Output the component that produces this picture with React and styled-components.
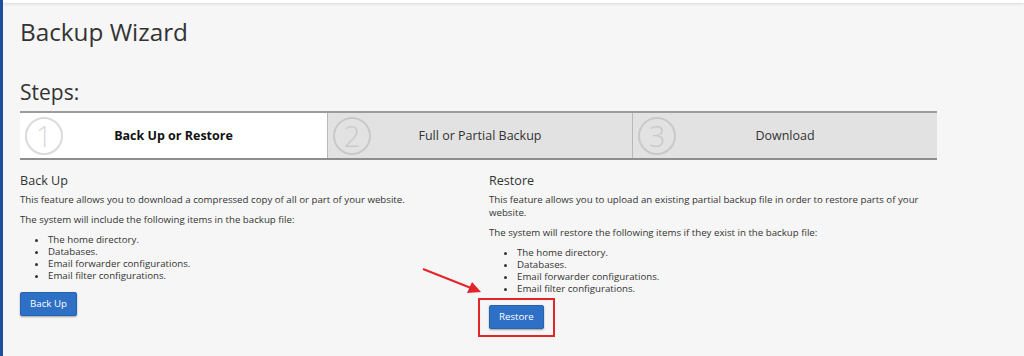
import React from 'react'
import styled, { createGlobalStyle } from 'styled-components'

const GlobalStyle = createGlobalStyle`
  html, body {
    margin: 0;
    padding: 0;
    background: #f6f6f6;
  }
  body {
    font-family: "Open Sans", "Liberation Sans", sans-serif;
    color: #333;
  }
`;

const Page = styled.div`
  display: flex;
  min-height: 356px;
`;

const SideBar = styled.div`
  width: 3px;
  background: #1e4f9f;
  flex-shrink: 0;
`;

const Main = styled.div`
  flex: 1;
  display: flex;
  flex-direction: column;
`;

const TopStrip = styled.div`
  height: 3px;
  background: #fff;
  box-shadow: 0 1px 3px rgba(0, 0, 0, 0.12);
`;

const Content = styled.div`
  padding: 0 87px 0 17px;
`;

const Title = styled.h1`
  margin: 14px 0 0;
  font-size: 24.3px;
  line-height: 30px;
  font-weight: 400;
  color: #333;
`;

const StepsTitle = styled.h2`
  margin: 32px 0 6px;
  font-size: 21px;
  line-height: 26px;
  font-weight: 400;
  color: #333;
`;

const StepBar = styled.div`
  display: grid;
  grid-template-columns: 307px 305px 1fr;
  border-top: 2px solid #9c9c9c;
  border-bottom: 2px solid #8e8e8e;
  height: 45px;
`;

const Step = styled.div`
  position: relative;
  display: flex;
  align-items: center;
  justify-content: center;
  background: ${p => (p.$active ? '#fff' : '#e2e2e2')};
  border-left: ${p => (p.$first ? 'none' : '1px solid #b9b9b9')};
  font-size: 12.5px;
  font-weight: ${p => (p.$active ? 700 : 400)};
  color: ${p => (p.$active ? '#111' : '#333')};
`;

const StepNumber = styled.span`
  position: absolute;
  left: 5px;
  top: 50%;
  transform: translateY(-50%);
  width: 34px;
  height: 34px;
  border-radius: 50%;
  border: 2px solid ${p => (p.$active ? '#dadada' : '#c9c9c9')};
  color: ${p => (p.$active ? '#dadada' : '#c9c9c9')};
  display: flex;
  align-items: center;
  justify-content: center;
  font-size: 29px;
  font-weight: 300;
  line-height: 1;
`;

const Columns = styled.div`
  display: grid;
  grid-template-columns: 1fr 1fr;
  column-gap: 21px;
  margin-top: 14px;
`;

const Column = styled.div`
  position: relative;
  padding-right: ${p => p.$narrow ? '10px' : '0'};
`;

const Heading = styled.h4`
  margin: 0 0 6px;
  font-size: 12.6px;
  line-height: 14px;
  font-weight: 400;
  color: #333;
`;

const Text = styled.p`
  margin: 0 0 7px;
  font-size: 9.7px;
  line-height: 12.9px;
`;

const List = styled.ul`
  margin: 0 0 7.5px;
  padding-left: 28px;
  font-size: 9.7px;
  line-height: 12.2px;
`;

const Button = styled.button`
  font-family: inherit;
  font-size: 9.7px;
  line-height: 12px;
  color: #fff;
  background: #2d70c6;
  border: 1px solid #2563b3;
  border-radius: 2px;
  padding: 5px 9px;
  box-shadow: 0 1px 2px rgba(0, 0, 0, 0.35);
  cursor: pointer;
`;

const Highlight = styled.div`
  display: inline-block;
  margin: -10px 0 0 -11px;
  padding: 3px 9px 6px;
  border: 2px solid #e3252a;
`;

const Arrow = styled.svg`
  position: absolute;
  left: -66px;
  top: 95px;
  overflow: visible;
`;

const items = [
  'The home directory.',
  'Databases.',
  'Email forwarder configurations.',
  'Email filter configurations.',
];

const App = () => {
  return (
    <Page>
      <GlobalStyle />
      <SideBar />
      <Main>
        <TopStrip />
        <Content>
          <Title>Backup Wizard</Title>
          <StepsTitle>Steps:</StepsTitle>
          <StepBar>
            <Step $active $first>
              <StepNumber $active>1</StepNumber>
              Back Up or Restore
            </Step>
            <Step>
              <StepNumber>2</StepNumber>
              Full or Partial Backup
            </Step>
            <Step>
              <StepNumber>3</StepNumber>
              Download
            </Step>
          </StepBar>
          <Columns>
            <Column>
              <Heading>Back Up</Heading>
              <Text>This feature allows you to download a compressed copy of all or part of your website.</Text>
              <Text>The system will include the following items in the backup file:</Text>
              <List>
                {items.map(i => <li key={i}>{i}</li>)}
              </List>
              <Button>Back Up</Button>
            </Column>
            <Column $narrow>
              <Heading>Restore</Heading>
              <Text>This feature allows you to upload an existing partial backup file in order to restore parts of your website.</Text>
              <Text>The system will restore the following items if they exist in the backup file:</Text>
              <List>
                {items.map(i => <li key={i}>{i}</li>)}
              </List>
              <Highlight>
                <Button>Restore</Button>
              </Highlight>
              <Arrow width="60" height="26" viewBox="0 0 60 26">
                <line x1="0" y1="0" x2="48" y2="19" stroke="#e3252a" strokeWidth="2" />
                <polygon points="58,23 44,24 49,13" fill="#e3252a" />
              </Arrow>
            </Column>
          </Columns>
        </Content>
      </Main>
    </Page>
  );
};

export default App;
